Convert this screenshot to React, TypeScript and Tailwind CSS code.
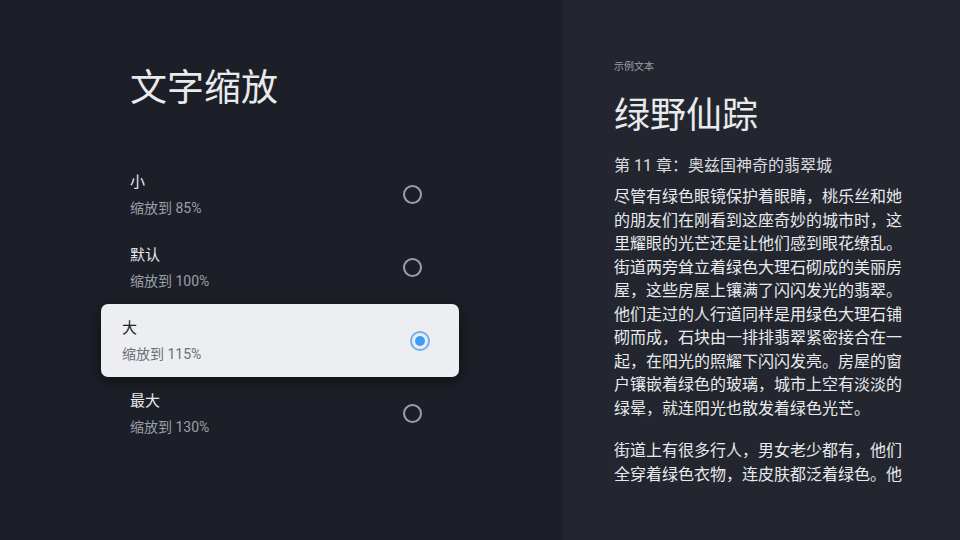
const options = [
  { label: "小", hint: "缩放到 85%" },
  { label: "默认", hint: "缩放到 100%" },
  { label: "大", hint: "缩放到 115%" },
  { label: "最大", hint: "缩放到 130%" },
];

const selected = 2;

function Radio({ checked }: { checked: boolean }) {
  if (checked) {
    return (
      <span className="flex h-[20px] w-[20px] items-center justify-center rounded-full border-2 border-[#6eb0f2]">
        <span className="h-[10px] w-[10px] rounded-full bg-[#3d9cf2]" />
      </span>
    );
  }
  return <span className="block h-[19px] w-[19px] rounded-full border-2 border-[#9aa0a6]" />;
}

export default function App() {
  return (
    <div
      className="flex h-[540px] w-[960px] overflow-hidden bg-[#1c1f27]"
      style={{ fontFamily: 'Roboto, "Noto Sans CJK SC", sans-serif' }}
    >
      <div className="w-[562px] shrink-0">
        <h1 className="ml-[130px] mt-[70px] text-[37px] leading-none font-normal text-[#e8eaed]">
          文字缩放
        </h1>
        <div className="mt-[51px] flex flex-col">
          {options.map((opt, index) => {
            const active = index === selected;
            return (
              <div
                key={opt.label}
                className={
                  active
                    ? "ml-[101px] flex h-[73px] w-[358px] items-center justify-between rounded-[7px] bg-[#eceef1] pl-[21px] pr-[29px] shadow-[0_4px_14px_rgba(0,0,0,0.55)]"
                    : "ml-[108px] flex h-[73px] w-[343px] items-center justify-between pl-[22px] pr-[29px]"
                }
              >
                <div className="flex flex-col">
                  <span
                    className={
                      active
                        ? "text-[15px] leading-[20px] text-[#202124]"
                        : "text-[15px] leading-[20px] text-[#e8eaed]"
                    }
                  >
                    {opt.label}
                  </span>
                  <span
                    className={
                      active
                        ? "mt-[7px] text-[14px] leading-[19px] text-[#6b6f75]"
                        : "mt-[7px] text-[14px] leading-[19px] text-[#9aa0a6]"
                    }
                  >
                    {opt.hint}
                  </span>
                </div>
                <Radio checked={active} />
              </div>
            );
          })}
        </div>
      </div>

      <div className="flex-1 bg-[#23262e] pl-[52px] pt-[60px]">
        <p className="text-[10px] leading-[14px] text-[#9aa0a6]">示例文本</p>
        <h2 className="mt-[20px] text-[36px] leading-[44px] font-normal text-[#e8eaed]">绿野仙踪</h2>
        <p className="mt-[17px] text-[16px] leading-[22px] text-[#dadce0]">第 11 章：奥兹国神奇的翡翠城</p>
        <div className="mt-[8px] w-[292px] text-[16px] leading-[23.5px] text-[#e8eaed]">
          <p>
            尽管有绿色眼镜保护着眼睛，桃乐丝和她的朋友们在刚看到这座奇妙的城市时，这里耀眼的光芒还是让他们感到眼花缭乱。街道两旁耸立着绿色大理石砌成的美丽房屋，这些房屋上镶满了闪闪发光的翡翠。他们走过的人行道同样是用绿色大理石铺砌而成，石块由一排排翡翠紧密接合在一起，在阳光的照耀下闪闪发亮。房屋的窗户镶嵌着绿色的玻璃，城市上空有淡淡的绿晕，就连阳光也散发着绿色光芒。
          </p>
          <p className="mt-[19px]">街道上有很多行人，男女老少都有，他们全穿着绿色衣物，连皮肤都泛着绿色。他</p>
        </div>
      </div>
    </div>
  );
}
